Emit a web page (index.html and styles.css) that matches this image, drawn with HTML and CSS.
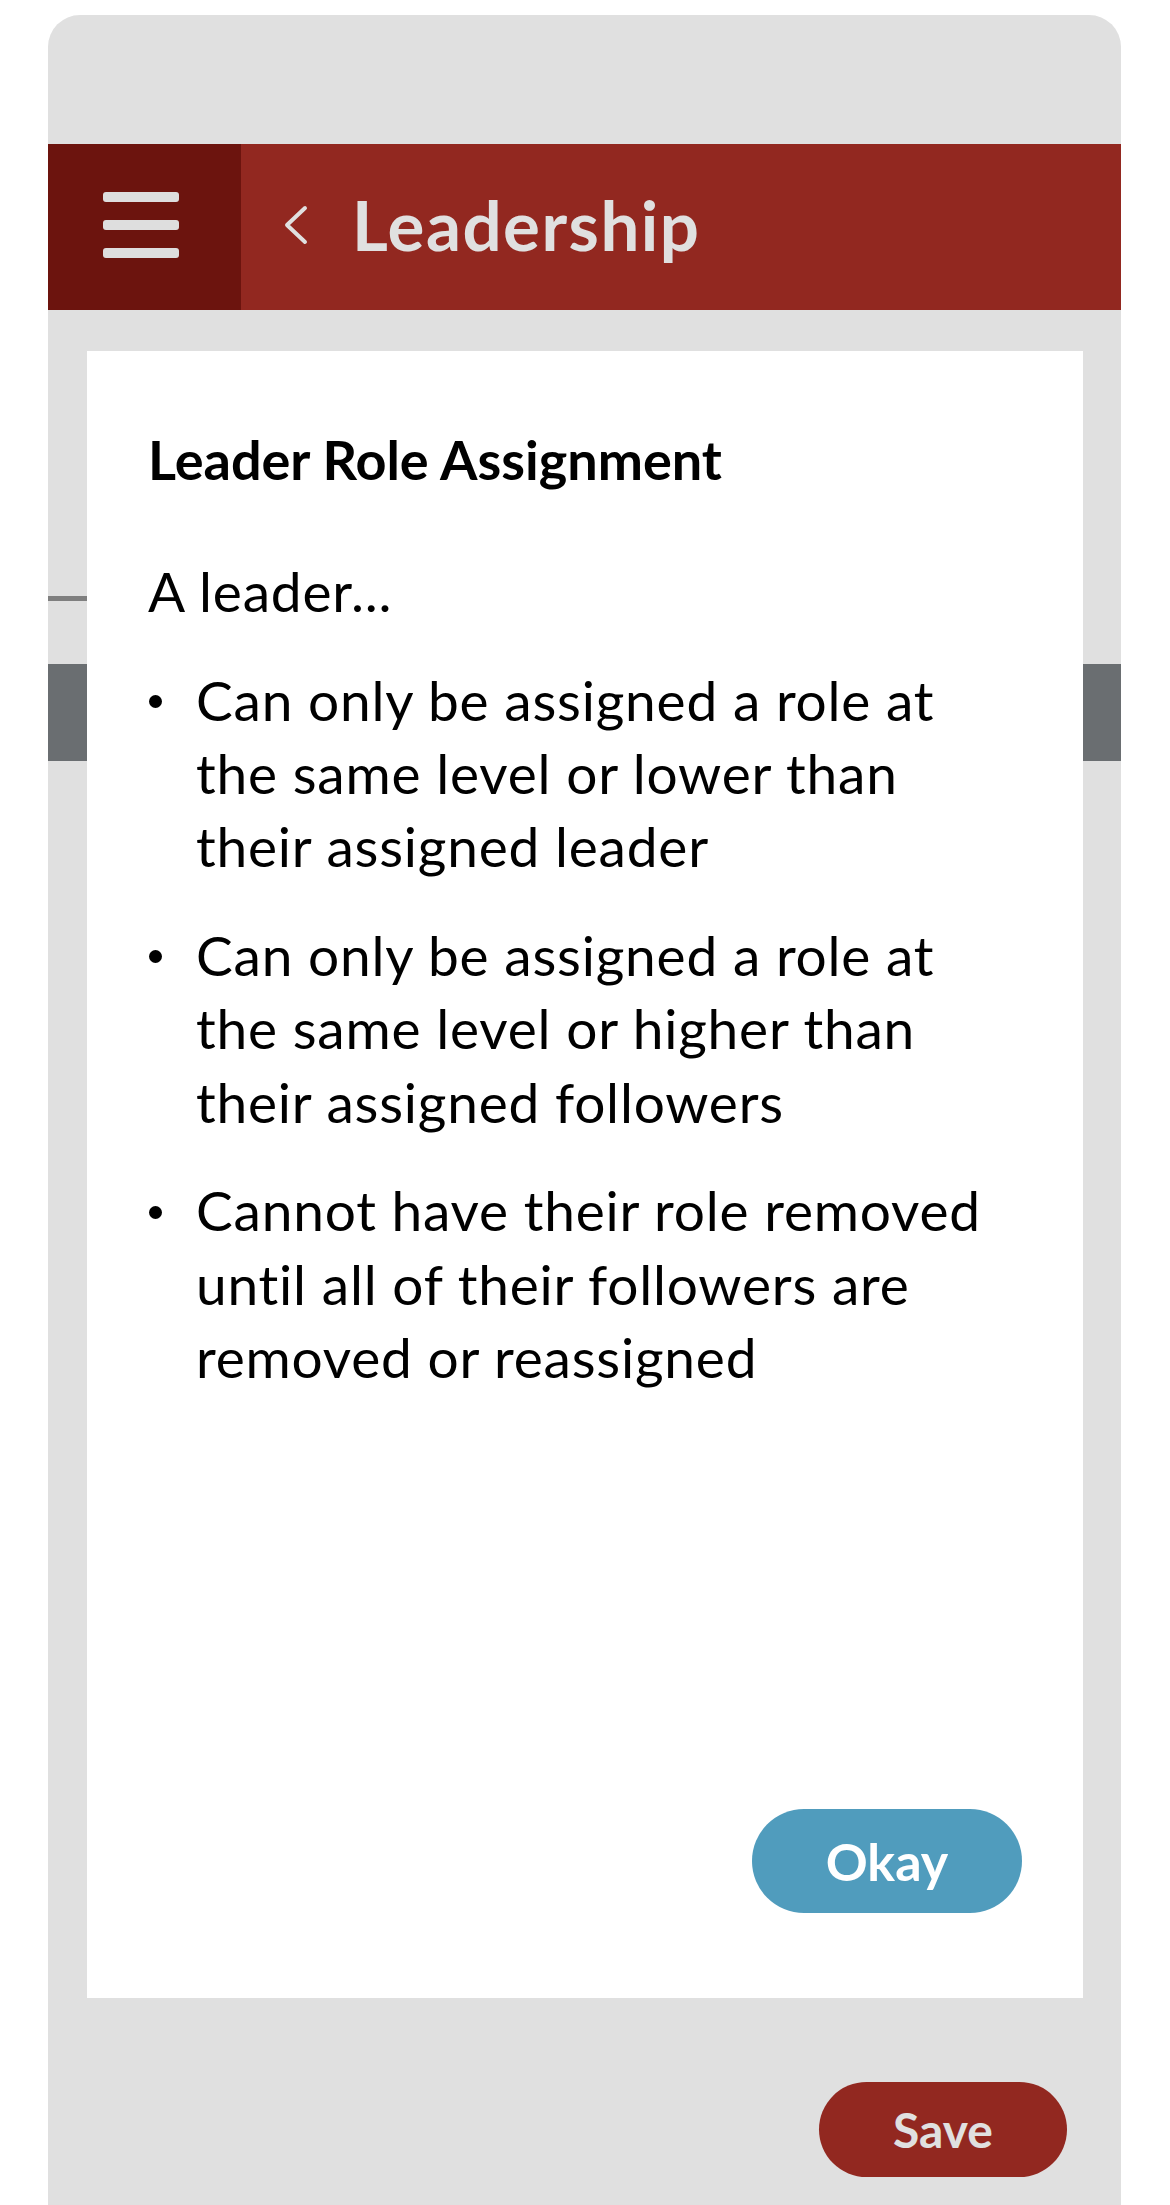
FILE: index.html
```html
<!DOCTYPE html>
<html lang="en">
<head>
<meta charset="utf-8">
<title>Leadership</title>
<link rel="stylesheet" href="styles.css">
</head>
<body>
<div class="phone">
  <div class="status-area"></div>
  <header class="app-header">
    <div class="menu-btn" aria-label="Menu">
      <span class="bar"></span>
      <span class="bar"></span>
      <span class="bar"></span>
    </div>
    <div class="title-area">
      <svg class="chevron" width="26" height="42" viewBox="0 0 26 42" aria-hidden="true">
        <polyline points="22,4 4,21 22,38" fill="none" stroke="#e0e0e0" stroke-width="4" stroke-linecap="round" stroke-linejoin="round"/>
      </svg>
      <h1 class="page-title">Leadership</h1>
    </div>
  </header>
  <main class="page">
    <div class="divider"></div>
    <div class="band"></div>
    <div class="page-actions">
      <button class="btn-save">Save</button>
    </div>
  </main>
  <div class="modal">
    <h2 class="modal-title">Leader Role Assignment</h2>
    <p class="modal-lead">A leader...</p>
    <ul class="rules">
      <li>Can only be assigned a role at the same level or lower than their assigned leader</li>
      <li>Can only be assigned a role at the same level or higher than their assigned followers</li>
      <li>Cannot have their role removed until all of their followers are removed or reassigned</li>
    </ul>
    <div class="modal-actions">
      <button class="btn-okay">Okay</button>
    </div>
  </div>
</div>
</body>
</html>
```

FILE: styles.css
```css
* { box-sizing: border-box; }
html, body { margin: 0; padding: 0; background: #ffffff; }
body { font-family: Lato, "Open Sans", sans-serif; }

.phone {
  position: relative;
  margin: 15px 0 0 48px;
  width: 1073px;
  height: 2190px;
  background: #e0e0e0;
  border-radius: 32px 32px 0 0;
  overflow: hidden;
}

.status-area { height: 129px; }

.app-header {
  display: flex;
  height: 166px;
  background: #922820;
}

.menu-btn {
  width: 193px;
  background: #6c140e;
  display: flex;
  flex-direction: column;
  gap: 18.5px;
  padding: 48px 0 0 55px;
}
.bar {
  display: block;
  width: 76px;
  height: 9.5px;
  border-radius: 3px;
  background: #dedede;
}

.title-area {
  display: flex;
  align-items: center;
  padding-left: 42px;
}
.chevron { display: block; margin-top: -4px; }
.page-title {
  margin: 0 0 0 43px;
  font-size: 69px;
  font-weight: 700;
  letter-spacing: 1.5px;
  color: #e0e0e0;
  line-height: 1;
  padding-bottom: 6px;
}

.page { display: flex; flex-direction: column; }
.divider {
  margin-top: 286px;
  width: 520px;
  height: 5px;
  background: #7f7f7f;
}
.band {
  margin-top: 63px;
  height: 97px;
  background: #6a6e71;
}
.page-actions {
  display: flex;
  justify-content: flex-end;
  padding: 1321px 54px 0 0;
}
.btn-save {
  width: 248px;
  height: 95px;
  border: 0;
  border-radius: 48px;
  background: #922820;
  color: #e0e0e0;
  font-family: Lato, sans-serif;
  font-size: 48px;
  font-weight: 700;
  padding: 0;
}

.modal {
  position: absolute;
  left: 39px;
  top: 336px;
  width: 996px;
  height: 1647px;
  background: #ffffff;
  display: flex;
  flex-direction: column;
  padding: 72px 61px 85px 61px;
  color: #000;
}
.modal-title {
  margin: 0;
  font-size: 54px;
  font-weight: 700;
  line-height: 73.3px;
}
.modal-lead {
  margin: 58.5px 0 0;
  font-size: 55px;
  letter-spacing: 0.8px;
  line-height: 73.3px;
}
.rules {
  list-style: none;
  margin: 35.5px 0 0;
  padding: 0 22px 0 0;
  font-size: 55px;
  letter-spacing: 0.8px;
  line-height: 73.3px;
}
.rules li {
  display: grid;
  grid-template-columns: 48px 1fr;
}
.rules li + li { margin-top: 35.5px; }
.rules li::before {
  content: "";
  width: 13px;
  height: 13px;
  margin: 31.5px 0 0 1px;
  border-radius: 50%;
  background: #000;
}
.modal-actions {
  margin-top: auto;
  display: flex;
  justify-content: flex-end;
}
.btn-okay {
  width: 270px;
  height: 104px;
  border: 0;
  border-radius: 52px;
  background: #509cbd;
  color: #ffffff;
  font-family: Lato, sans-serif;
  font-size: 52px;
  font-weight: 700;
  padding: 0;
}
```
